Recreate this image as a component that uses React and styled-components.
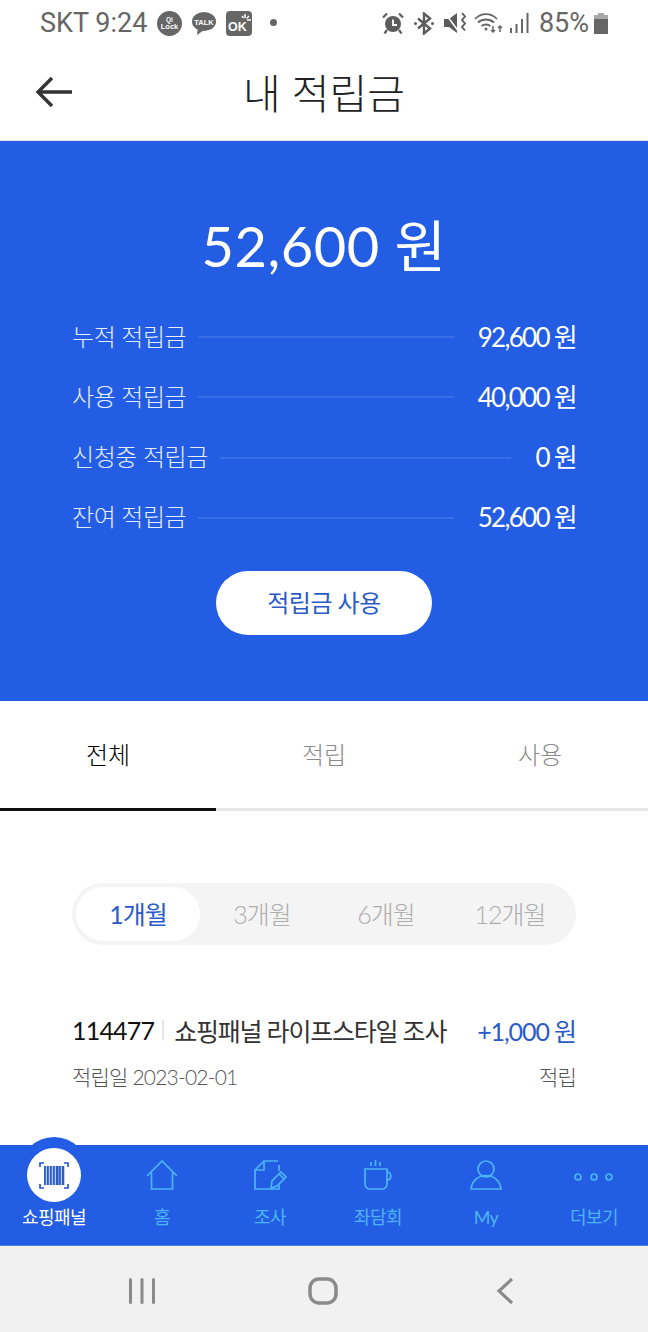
import React from "react";
import styled, { createGlobalStyle } from "styled-components";

const FONT = `Lato, "Noto Sans CJK KR", sans-serif`;

const GlobalStyle = createGlobalStyle`
  html, body {
    margin: 0;
    padding: 0;
    background: #fff;
  }
  * {
    box-sizing: border-box;
  }
`;

const Screen = styled.div`
  width: 648px;
  height: 1332px;
  display: flex;
  flex-direction: column;
  overflow: hidden;
  font-family: ${FONT};
  background: #fff;
`;

const StatusBar = styled.div`
  height: 46px;
  padding: 0 40px 0 40px;
  display: flex;
  align-items: center;
  justify-content: space-between;
  color: #666;
  font-family: Roboto, sans-serif;
  font-size: 27px;
`;

const StatusGroup = styled.div`
  display: flex;
  align-items: center;
  gap: ${(p) => p.$gap || 10}px;
`;

const Dot = styled.span`
  width: 7px;
  height: 7px;
  border-radius: 50%;
  background: #666;
  margin: 0 0 2px 8px;
`;

const Header = styled.div`
  height: 95px;
  display: flex;
  align-items: center;
  justify-content: center;
  position: relative;
  padding-bottom: 5px;
  border-bottom: 1px solid #e6e8ec;
`;

const BackButton = styled.div`
  position: absolute;
  left: 35px;
  top: 30px;
  width: 38px;
  height: 32px;
`;

const Title = styled.h1`
  margin: 0;
  font-size: 41px;
  font-weight: 300;
  color: #222;
`;

const Summary = styled.section`
  height: 560px;
  background: #235de3;
  padding: 70px 72px 0 72px;
  display: flex;
  flex-direction: column;
  color: #fff;
`;

const Balance = styled.div`
  text-align: center;
  font-size: 56px;
  line-height: 70px;
  font-weight: 400;
  letter-spacing: 0.5px;
  margin-bottom: 41px;
`;

const SummaryRows = styled.div`
  display: flex;
  flex-direction: column;
  gap: 30.3px;
`;

const SummaryRow = styled.div`
  height: 30px;
  display: flex;
  align-items: center;
`;

const SummaryLabel = styled.span`
  padding-bottom: 4px;
  font-size: 24px;
  font-weight: 300;
  letter-spacing: -0.45px;
  color: #e6edff;
  white-space: nowrap;
`;

const Leader = styled.span`
  flex: 1;
  height: 2px;
  background: #3a6de8;
  margin: 0 24px 0 12px;
`;

const SummaryValue = styled.span`
  padding-bottom: 4px;
  font-size: 26px;
  font-weight: 400;
  letter-spacing: -1.7px;
  white-space: nowrap;
`;

const UseButton = styled.button`
  align-self: center;
  width: 216px;
  height: 64px;
  margin-top: 38px;
  padding-bottom: 4px;
  border: none;
  border-radius: 33px;
  background: #fff;
  color: #2a5bc9;
  font-family: ${FONT};
  font-size: 24px;
  font-weight: 400;
  letter-spacing: -0.5px;
`;

const Tabs = styled.div`
  height: 110px;
  display: flex;
`;

const Tab = styled.div`
  flex: 1;
  display: flex;
  align-items: center;
  justify-content: center;
  padding-bottom: 3px;
  font-size: 24px;
  font-weight: 300;
  color: ${(p) => (p.$active ? "#000" : "#8b8b8b")};
  border-bottom: 3px solid ${(p) => (p.$active ? "#111" : "#e8e8e8")};
`;

const Content = styled.div`
  flex: 1;
  padding: 72px 72px 0 72px;
`;

const Segments = styled.div`
  height: 62px;
  padding: 4px;
  border-radius: 31px;
  background: #f4f4f4;
  display: grid;
  grid-template-columns: repeat(4, 1fr);
  margin-bottom: 65px;
`;

const Segment = styled.div`
  display: flex;
  align-items: center;
  justify-content: center;
  padding-bottom: 2px;
  border-radius: 27px;
  font-size: 25px;
  letter-spacing: -1px;
  font-weight: ${(p) => (p.$active ? 400 : 300)};
  color: ${(p) => (p.$active ? "#2a5bc9" : "#adadad")};
  background: ${(p) => (p.$active ? "#fff" : "transparent")};
`;

const HistoryTop = styled.div`
  display: flex;
  align-items: center;
  justify-content: space-between;
  height: 40px;
`;

const HistoryName = styled.div`
  display: flex;
  align-items: center;
  font-size: 25px;
  letter-spacing: -1.2px;
  color: #333;
  font-weight: 400;
`;

const OrderNo = styled.span`
  color: #111;
  letter-spacing: -0.8px;
`;

const NameDivider = styled.span`
  width: 2px;
  height: 20px;
  background: #e4e4e4;
  margin: 0 10px 0 8px;
`;

const Amount = styled.span`
  font-size: 25px;
  font-weight: 400;
  letter-spacing: -1.1px;
  color: #2a5bc9;
`;

const HistoryBottom = styled.div`
  display: flex;
  justify-content: space-between;
  margin-top: 11px;
  font-size: 21px;
  font-weight: 300;
  letter-spacing: -0.8px;
  color: #555;
`;

const BottomNav = styled.nav`
  height: 101px;
  background: #235de3;
  border-bottom: 1px solid #4f80ee;
  display: grid;
  grid-template-columns: repeat(6, 108px);
  position: relative;
`;

const NavItem = styled.div`
  display: flex;
  flex-direction: column;
  align-items: center;
  color: ${(p) => (p.$active ? "#fff" : "#4db5f5")};
  font-size: 18px;
  font-weight: 400;
  letter-spacing: -0.6px;
`;

const NavIconBox = styled.div`
  height: 60px;
  margin-bottom: 1px;
  display: flex;
  align-items: center;
  justify-content: center;
`;

const BarcodeBump = styled.div`
  position: absolute;
  left: 20px;
  top: -8px;
  width: 68px;
  height: 68px;
  padding-top: 8px;
  border-radius: 50%;
  background: #235de3;
  display: flex;
  align-items: center;
  justify-content: center;
`;

const BarcodeCircle = styled.div`
  width: 54px;
  height: 54px;
  border-radius: 50%;
  background: #fff;
  display: flex;
  align-items: center;
  justify-content: center;
`;

const NavLabel = styled.span`
  line-height: 22px;
`;

const SystemBar = styled.div`
  height: 86px;
  padding-top: 3px;
  background: #f1f1f1;
  display: grid;
  grid-template-columns: 284px 78px 1fr;
  align-items: center;
`;

const SystemSlot = styled.div`
  display: flex;
  justify-content: ${(p) => p.$justify || "center"};
  padding: ${(p) => p.$pad || 0};
`;

const GREY = "#666";
const STROKE = "#4db5f5";

function QiLockBadge() {
  return (
    <svg width="25" height="25" viewBox="0 0 25 25">
      <circle cx="12.500" cy="12.500" r="12.500" fill={GREY} />
      <text x="12.500" y="11" textAnchor="middle" fontFamily="Liberation Sans" fontSize="6.500" fontWeight="700" fill="#fff">Qi</text>
      <text x="12.500" y="18" textAnchor="middle" fontFamily="Liberation Sans" fontSize="7.500" fontWeight="700" fill="#fff">Lock</text>
    </svg>
  );
}

function TalkBadge() {
  return (
    <svg width="24" height="25" viewBox="0 0 24 25">
      <ellipse cx="12" cy="10.500" rx="12" ry="9.500" fill={GREY} />
      <path d="M6 16l-1 8 7-5z" fill={GREY} />
      <text x="12" y="13.500" textAnchor="middle" fontFamily="Liberation Sans" fontSize="7.500" fontWeight="700" fill="#fff">TALK</text>
    </svg>
  );
}

function OkBadge() {
  return (
    <svg width="26" height="25" viewBox="0 0 26 25">
      <rect width="26" height="25" rx="4" fill={GREY} />
      <text x="2" y="20" fontFamily="Liberation Sans" fontSize="12.500" fontWeight="700" fill="#fff">OK</text>
      <path d="M19 3v4M23 5l-2.500 2.500M25 9h-4M16 5l1.500 2" stroke="#fff" strokeWidth="1.500" fill="none" />
    </svg>
  );
}

function AlarmIcon() {
  return (
    <svg width="22" height="22" viewBox="0 0 22 22" fill="none">
      <circle cx="11" cy="12" r="8" fill="#5c5c5c" />
      <path d="M11 7.500V13h4" stroke="#fff" strokeWidth="1.800" />
      <path d="M1 5.500L5 1.500M21 5.500L17 1.500M5 18l-2.500 3.500M17 18l2.500 3.500" stroke="#5c5c5c" strokeWidth="2.200" />
    </svg>
  );
}

function BluetoothIcon() {
  return (
    <svg width="20" height="23" viewBox="0 0 20 23" fill="none" stroke="#5c5c5c" strokeWidth="2.400">
      <path d="M4 6.500l12 10-6 5V1.500l6 5-12 10" />
      <circle cx="1.500" cy="11.500" r="1.500" fill="#5c5c5c" stroke="none" />
      <circle cx="18.500" cy="11.500" r="1.500" fill="#5c5c5c" stroke="none" />
    </svg>
  );
}

function MuteIcon() {
  return (
    <svg width="23" height="22" viewBox="0 0 23 22" fill="none">
      <path d="M0 7h5l8-6v20l-8-6H0z" fill="#5c5c5c" />
      <path d="M1 1l14 19" stroke="#fff" strokeWidth="1.500" />
      <path d="M18 1l3 3.500-3 3.500 3 3.500-3 3.500 3 3.500" stroke="#5c5c5c" strokeWidth="1.900" />
    </svg>
  );
}

function WifiIcon() {
  return (
    <svg width="29" height="20" viewBox="0 0 29 20" fill="none" stroke={GREY} strokeWidth="1.800">
      <path d="M1 6c6-6.500 16-6.500 22 0M4 9.500c4.500-4 11.500-4 16 0M7.500 13c2.500-2 6.500-2 9 0" />
      <circle cx="12" cy="16" r="1.500" fill={GREY} stroke="none" />
      <path d="M19 13v6M17 17l2 2 2-2M26 19v-6M24 15l2-2 2 2" strokeWidth="1.500" />
    </svg>
  );
}

function SignalIcon() {
  return (
    <svg width="19" height="20" viewBox="0 0 19 20" fill={GREY}>
      <rect x="0" y="15" width="2" height="5" />
      <rect x="5.500" y="11" width="2" height="9" />
      <rect x="11" y="6" width="2" height="14" />
      <rect x="16.500" y="0" width="2" height="20" />
    </svg>
  );
}

function BatteryIcon() {
  return (
    <svg width="14" height="21" viewBox="0 0 14 21" fill={GREY}>
      <rect x="4" y="0" width="6" height="2" fill="#a8a8a8" />
      <rect x="0" y="2" width="14" height="4" fill="#a8a8a8" />
      <rect x="0" y="6" width="14" height="15" />
    </svg>
  );
}

function BackArrow() {
  return (
    <svg width="38" height="32" viewBox="0 0 38 32" fill="none" stroke="#333" strokeWidth="3.400">
      <path d="M37 16H3M17 2L3 16l14 14" />
    </svg>
  );
}

function BarcodeIcon() {
  const bars = [0, 3, 6, 9, 12, 15, 18];
  return (
    <svg width="30" height="27" viewBox="0 0 30 27" fill="none">
      <path d="M1 5V1h4M29 5V1h-4M1 22v4h4M29 22v4h-4" stroke="#2a5bc9" strokeWidth="1.700" />
      <rect x="5" y="4" width="20" height="19" fill="#b9cdf2" />
      {bars.map((x) => (
        <rect key={x} x={5 + x} y="4" width={x === 12 ? 2.500 : 1.800} height="19" fill="#2c5cc4" />
      ))}
      <rect x="23.500" y="4" width="1.800" height="19" fill="#2c5cc4" />
    </svg>
  );
}

function HomeIcon() {
  return (
    <svg width="32" height="30" viewBox="0 0 32 30" fill="none" stroke={STROKE} strokeWidth="1.700">
      <path d="M1 16L16 1l15 15M5.500 12.500V29h21V12.500" />
    </svg>
  );
}

function SurveyIcon() {
  return (
    <svg width="33" height="30" viewBox="0 0 33 30" fill="none" stroke={STROKE} strokeWidth="1.700">
      <path d="M24 1H10L1 10v19h24v-4M1 10h9V1M25 5v6" />
      <path d="M17 28l1-7L27 12l5 5-9 9z" fill="#235de3" />
      <path d="M25 14l5 5" />
    </svg>
  );
}

function CupIcon() {
  return (
    <svg width="28" height="30" viewBox="0 0 28 30" fill="none" stroke={STROKE} strokeWidth="1.700">
      <path d="M1 9h22v15a5 5 0 0 1-5 5H6a5 5 0 0 1-5-5z" />
      <path d="M23 12c5 0 5 8 0 8M7 2v4M11.500 0v6M16 2v4" />
    </svg>
  );
}

function UserIcon() {
  return (
    <svg width="32" height="30" viewBox="0 0 32 30" fill="none" stroke={STROKE} strokeWidth="1.700">
      <circle cx="16" cy="9" r="8" />
      <path d="M1 29c1-9 8-13.500 15-13.500S30 20 31 29z" />
    </svg>
  );
}

function DotsIcon() {
  return (
    <svg width="40" height="30" viewBox="0 0 40 30" fill="none" stroke={STROKE} strokeWidth="1.700">
      <circle cx="4" cy="17" r="3" />
      <circle cx="20" cy="17" r="3" />
      <circle cx="35" cy="17" r="3" />
    </svg>
  );
}

const summaryRows = [
  { label: "누적 적립금", value: "92,600 원" },
  { label: "사용 적립금", value: "40,000 원" },
  { label: "신청중 적립금", value: "0 원" },
  { label: "잔여 적립금", value: "52,600 원" },
];

const navItems = [
  { label: "홈", icon: <HomeIcon /> },
  { label: "조사", icon: <SurveyIcon /> },
  { label: "좌담회", icon: <CupIcon /> },
  { label: "My", icon: <UserIcon /> },
  { label: "더보기", icon: <DotsIcon /> },
];

export default function App() {
  return (
    <Screen>
      <GlobalStyle />
      <StatusBar>
        <StatusGroup>
          <span>SKT 9:24</span>
          <QiLockBadge />
          <TalkBadge />
          <OkBadge />
          <Dot />
        </StatusGroup>
        <StatusGroup>
          <AlarmIcon />
          <BluetoothIcon />
          <StatusGroup $gap={7}>
            <MuteIcon />
            <WifiIcon />
            <SignalIcon />
          </StatusGroup>
          <StatusGroup $gap={5}>
            <span>85%</span>
            <BatteryIcon />
          </StatusGroup>
        </StatusGroup>
      </StatusBar>

      <Header>
        <BackButton>
          <BackArrow />
        </BackButton>
        <Title>내 적립금</Title>
      </Header>

      <Summary>
        <Balance>52,600 원</Balance>
        <SummaryRows>
          {summaryRows.map((row) => (
            <SummaryRow key={row.label}>
              <SummaryLabel>{row.label}</SummaryLabel>
              <Leader />
              <SummaryValue>{row.value}</SummaryValue>
            </SummaryRow>
          ))}
        </SummaryRows>
        <UseButton>적립금 사용</UseButton>
      </Summary>

      <Tabs>
        <Tab $active>전체</Tab>
        <Tab>적립</Tab>
        <Tab>사용</Tab>
      </Tabs>

      <Content>
        <Segments>
          <Segment $active>1개월</Segment>
          <Segment>3개월</Segment>
          <Segment>6개월</Segment>
          <Segment>12개월</Segment>
        </Segments>
        <HistoryTop>
          <HistoryName>
            <OrderNo>114477</OrderNo>
            <NameDivider />
            쇼핑패널 라이프스타일 조사
          </HistoryName>
          <Amount>+1,000 원</Amount>
        </HistoryTop>
        <HistoryBottom>
          <span>적립일 2023-02-01</span>
          <span>적립</span>
        </HistoryBottom>
      </Content>

      <BottomNav>
        <NavItem $active>
          <BarcodeBump>
            <BarcodeCircle>
              <BarcodeIcon />
            </BarcodeCircle>
          </BarcodeBump>
          <NavIconBox />
          <NavLabel>쇼핑패널</NavLabel>
        </NavItem>
        {navItems.map((item) => (
          <NavItem key={item.label}>
            <NavIconBox>{item.icon}</NavIconBox>
            <NavLabel>{item.label}</NavLabel>
          </NavItem>
        ))}
      </BottomNav>

      <SystemBar>
        <SystemSlot>
          <svg width="28" height="28" viewBox="0 0 28 28" fill="#8a8a8a">
            <rect x="1" y="1" width="3" height="26" rx="1.500" />
            <rect x="12.500" y="1" width="3" height="26" rx="1.500" />
            <rect x="24" y="1" width="3" height="26" rx="1.500" />
          </svg>
        </SystemSlot>
        <SystemSlot>
          <svg width="30" height="28" viewBox="0 0 30 28" fill="none" stroke="#8a8a8a" strokeWidth="3.500">
            <rect x="2" y="2" width="26" height="24" rx="9" />
          </svg>
        </SystemSlot>
        <SystemSlot $justify="flex-start" $pad="0 0 0 134px">
          <svg width="18" height="28" viewBox="0 0 18 28" fill="none" stroke="#8a8a8a" strokeWidth="3.200">
            <path d="M16 2L3 14l13 12" />
          </svg>
        </SystemSlot>
      </SystemBar>
    </Screen>
  );
}
